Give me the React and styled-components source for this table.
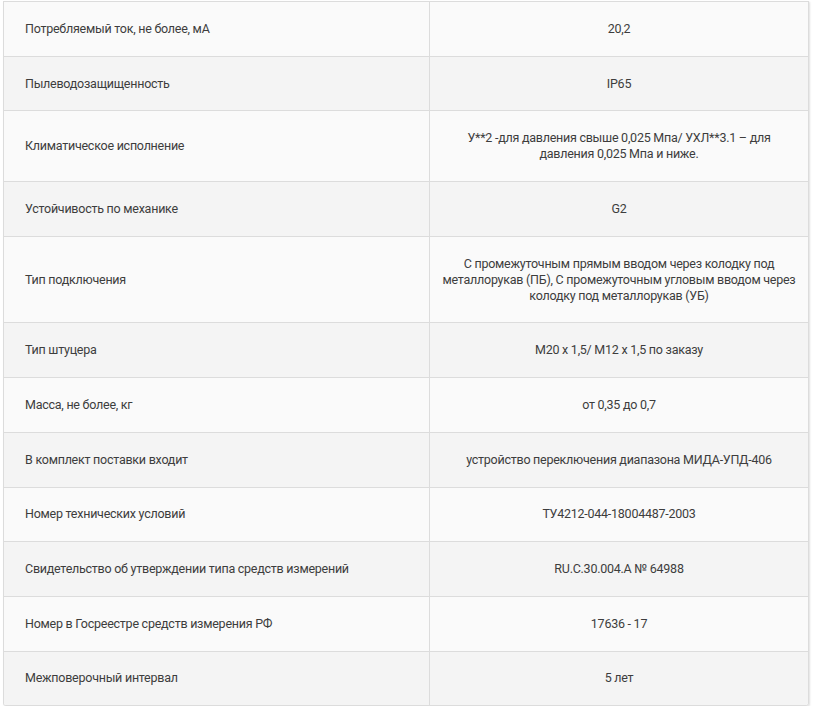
import React from 'react';
import styled, { createGlobalStyle } from 'styled-components';

const GlobalStyle = createGlobalStyle`
  body {
    margin: 0;
    background: #ffffff;
    font-family: Roboto, "Liberation Sans", Arial, sans-serif;
  }
`;

const Page = styled.div`
  padding: 1px 4px 0 3px;
`;

const SpecsTable = styled.table`
  width: 806px;
  border-collapse: separate;
  border-spacing: 0;
  border: 1px solid #dcdcdc;
  border-top: none;
  border-radius: 0 0 3px 3px;
  box-shadow: 1px 1px 2px rgba(0, 0, 0, 0.12);
  overflow: hidden;
`;

const Row = styled.tr`
  background: ${(p) => (p.$odd ? '#f4f4f4' : '#fafafa')};
`;

const Cell = styled.td`
  border-top: 1px solid #dcdcdc;
  padding: 18.85px 20px 18.85px 21px;
  font-size: 12.5px;
  line-height: 16px;
  color: #3d3d3d;
  vertical-align: middle;
  letter-spacing: -0.25px;
`;

const NameCell = styled(Cell)`
  width: 384px;
  border-right: 1px solid #dcdcdc;
`;

const ValueCell = styled(Cell)`
  text-align: center;
  padding: 18.85px 12px;
`;

const specs = [
  ['Потребляемый ток, не более, мА', '20,2'],
  ['Пылеводозащищенность', 'IP65'],
  [
    'Климатическое исполнение',
    'У**2 -для давления свыше 0,025 Мпа/ УХЛ**3.1 – для давления 0,025 Мпа и ниже.',
  ],
  ['Устойчивость по механике', 'G2'],
  [
    'Тип подключения',
    'С промежуточным прямым вводом через колодку под металлорукав (ПБ), С промежуточным угловым вводом через колодку под металлорукав (УБ)',
  ],
  ['Тип штуцера', 'М20 х 1,5/ М12 х 1,5 по заказу'],
  ['Масса, не более, кг', 'от 0,35 до 0,7'],
  ['В комплект поставки входит', 'устройство переключения диапазона МИДА-УПД-406'],
  ['Номер технических условий', 'ТУ4212-044-18004487-2003'],
  ['Свидетельство об утверждении типа средств измерений', 'RU.C.30.004.A № 64988'],
  ['Номер в Госреестре средств измерения РФ', '17636 - 17'],
  ['Межповерочный интервал', '5 лет'],
];

const App = () => {
  return (
    <Page>
      <GlobalStyle />
      <SpecsTable>
        <tbody>
          {specs.map(([name, value], index) => (
            <Row key={index} $odd={index % 2 === 1}>
              <NameCell>{name}</NameCell>
              <ValueCell>{value}</ValueCell>
            </Row>
          ))}
        </tbody>
      </SpecsTable>
    </Page>
  );
};

export default App;
